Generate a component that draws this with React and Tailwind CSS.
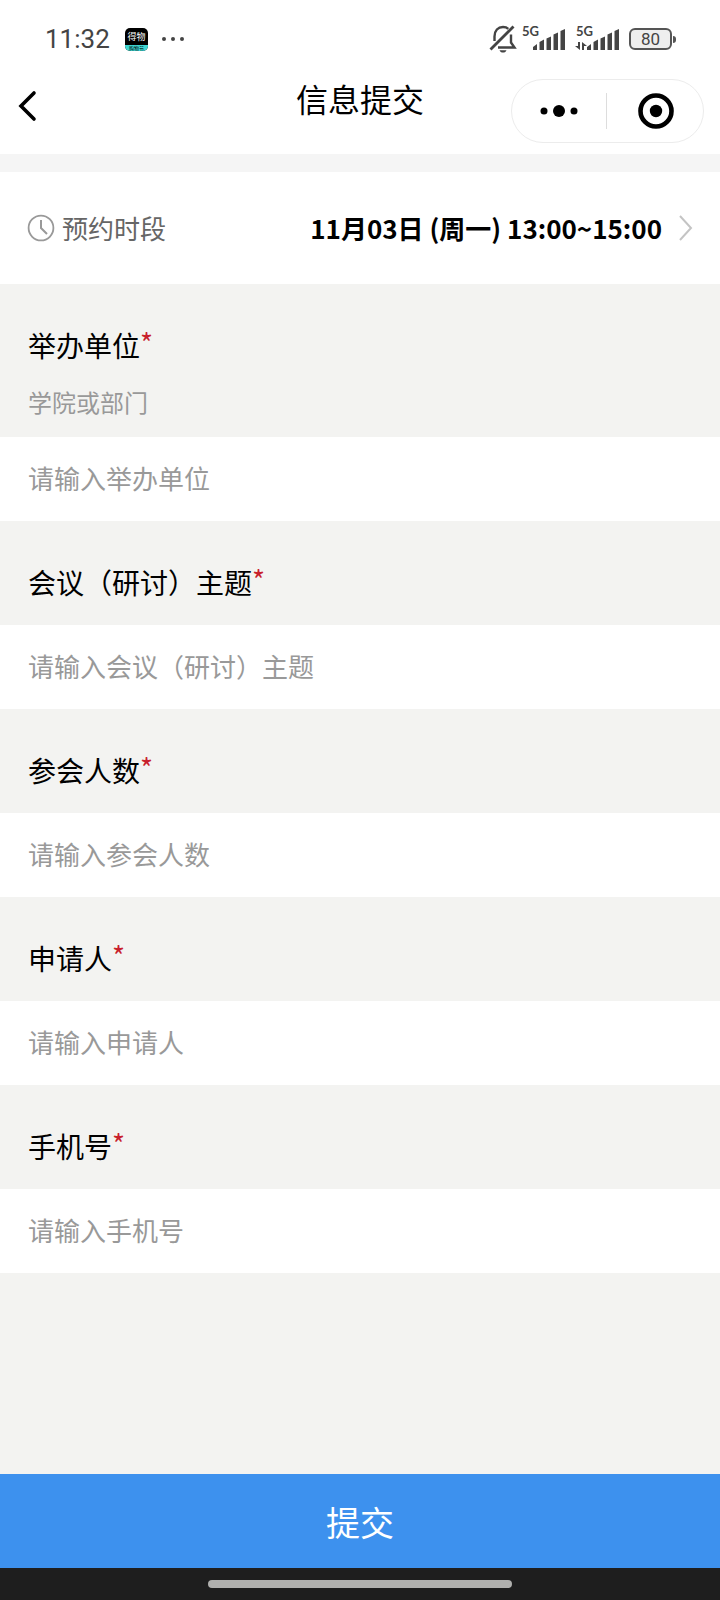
import React, { useState } from "react";

const fields = [
  { name: "organizer", label: "举办单位", hint: "学院或部门", placeholder: "请输入举办单位" },
  { name: "topic", label: "会议（研讨）主题", placeholder: "请输入会议（研讨）主题" },
  { name: "attendees", label: "参会人数", placeholder: "请输入参会人数", inputMode: "numeric" },
  { name: "applicant", label: "申请人", placeholder: "请输入申请人" },
  { name: "phone", label: "手机号", placeholder: "请输入手机号", inputMode: "tel" },
];

const MutedBell = () => (
  <svg viewBox="0 0 28 30" className="h-[30px] w-7" fill="none" stroke="#444" strokeWidth="2.4">
    <path d="M5.5 17v-4.500C5.500 6.500 9 3 14 3c2 0 4 .6 5.300 1.800" />
    <path d="M9 23.500h16.500l-3.500-5v-8" />
    <path d="M1.500 25.500 24.500 2.500" strokeWidth="2.8" />
    <path d="M10.500 26.200h7c-.6 1.600-1.800 2.300-3.500 2.300s-2.900-.7-3.500-2.300z" fill="#444" stroke="none" />
  </svg>
);

const Signal = ({ data }) => (
  <svg viewBox="0 0 46 34" className="h-[34px] w-[46px]" fill="#444">
    <text x="1" y="14" fontSize="13" fontWeight="700" fontFamily="Lato, sans-serif">
      5G
    </text>
    {data && <path d="M3 20h2v8L0 24h3zM7 28h2v-4h3L7 20z" />}
    <path d="M12 28v-3l4-3v6zM18.500 28v-8l4.500-2.500V28zM25.500 28V16.500l4.500-2V28zM32.500 28V12.500l4.500-2V28zM39.500 28V9l4.500-2v21z" />
  </svg>
);

const StatusBar = () => (
  <div className="flex items-center justify-between py-6 pl-[45px] pr-11 text-[#444]">
    <div className="flex h-[30px] items-center">
      <span className="w-[66px] font-[Roboto,sans-serif] text-[26px] leading-[30px]">11:32</span>
      <span className="ml-[14px] flex h-[23px] w-[23px] flex-col overflow-hidden rounded-[5px] bg-black text-center">
        <span className="text-[9px] leading-[17px] text-white">得物</span>
        <span className="flex-1 bg-[#3fd6d2] text-[5px] leading-[6px] text-black">购物节</span>
      </span>
      <svg viewBox="0 0 24 6" className="ml-[13px] h-[6px] w-6" fill="#444">
        <circle cx="3" cy="3" r="2" />
        <circle cx="12" cy="3" r="2" />
        <circle cx="21" cy="3" r="2" />
      </svg>
    </div>
    <div className="flex h-[30px] items-center">
      <MutedBell />
      <div className="ml-1 flex gap-2">
        <Signal />
        <Signal data />
      </div>
      <div className="ml-2 flex items-center gap-px">
        <span className="flex h-[22px] w-[43px] items-center justify-center rounded-[6px] border-2 border-[#555] bg-[#eee] font-[Roboto,sans-serif] text-[17px] leading-none">
          80
        </span>
        <span className="h-[7px] w-[3px] rounded-r-sm bg-[#555]" />
      </div>
    </div>
  </div>
);

const NavBar = () => (
  <div className="grid grid-cols-[1fr_auto_1fr] items-start pb-[11px]">
    <button type="button" aria-label="返回" className="flex h-14 w-[54px] items-center justify-center">
      <svg viewBox="0 0 20 32" className="h-8 w-5" fill="none" stroke="#000" strokeWidth="3.6" strokeLinecap="round">
        <path d="M17 3 4 16l13 13" />
      </svg>
    </button>
    <h1 className="text-[32px] leading-10">信息提交</h1>
    <div className="mr-4 mt-px flex h-16 w-[193px] items-center justify-self-end rounded-full border border-[#ececec]">
      <button type="button" aria-label="更多" className="flex flex-1 justify-center">
        <svg viewBox="0 0 40 16" className="h-4 w-10">
          <circle cx="5" cy="8" r="3.5" />
          <circle cx="20" cy="8" r="6" />
          <circle cx="35" cy="8" r="3.5" />
        </svg>
      </button>
      <span className="h-9 w-px bg-[#ddd]" />
      <button type="button" aria-label="关闭" className="flex flex-1 justify-center pl-[3px]">
        <svg viewBox="0 0 36 36" className="h-9 w-9">
          <circle cx="18" cy="18" r="15.5" fill="none" stroke="#000" strokeWidth="4.6" />
          <circle cx="18" cy="18" r="6.2" />
        </svg>
      </button>
    </div>
  </div>
);

const Field = ({ field, value, onChange }) => (
  <div>
    <div className="px-7">
      <label htmlFor={field.name} className="flex pb-[23px] pt-[41px] text-[28px] leading-10 text-black">
        {field.label}
        <span className="leading-[34px] text-[#c8202c]">*</span>
      </label>
      {field.hint && <p className="pb-[21px] text-2xl leading-7 text-[#999]">{field.hint}</p>}
    </div>
    <input
      id={field.name}
      name={field.name}
      inputMode={field.inputMode}
      value={value}
      onChange={onChange}
      placeholder={field.placeholder}
      className="block h-[84px] w-full bg-white px-7 pb-[3px] text-[26px] text-black outline-none placeholder:text-[#999]"
    />
  </div>
);

const App = () => {
  const [values, setValues] = useState({});

  const handleChange = (e) => {
    setValues({ ...values, [e.target.name]: e.target.value });
  };

  return (
    <div className="flex min-h-screen flex-col bg-[#f3f3f1] font-['Noto_Sans_CJK_SC',sans-serif] text-black">
      <header className="bg-white">
        <StatusBar />
        <NavBar />
      </header>

      <form className="flex flex-1 flex-col" onSubmit={(e) => e.preventDefault()}>
        {/* Time slot */}
        <div className="bg-[#f5f5f5] pt-[18px]">
          <button type="button" className="flex h-28 w-full items-center bg-white px-[27px]">
            <svg viewBox="0 0 28 28" className="h-7 w-7" fill="none" stroke="#999" strokeWidth="1.8">
              <circle cx="14" cy="14" r="12.4" />
              <path d="M14 6v8l6 6" strokeWidth="2" />
            </svg>
            <span className="ml-[7px] text-[26px] leading-10 text-[#666]">预约时段</span>
            <span className="ml-auto text-[26px] font-bold leading-10">11月03日 (周一) 13:00~15:00</span>
            <svg viewBox="0 0 14 26" className="ml-[17px] h-[26px] w-[14px]" fill="none" stroke="#c4c4c4" strokeWidth="2">
              <path d="M1 1l11 12L1 25" />
            </svg>
          </button>
        </div>

        {fields.map((field) => (
          <Field key={field.name} field={field} value={values[field.name] || ""} onChange={handleChange} />
        ))}

        <button type="submit" className="mt-auto h-[94px] w-full bg-[#3d91ee] text-[34px] text-white">
          提交
        </button>
      </form>

      {/* Gesture bar */}
      <div className="flex h-8 items-center justify-center bg-[#1e1e1e]">
        <span className="h-2 w-[304px] rounded-full bg-[#b0b0ae]" />
      </div>
    </div>
  );
};

export default App;
